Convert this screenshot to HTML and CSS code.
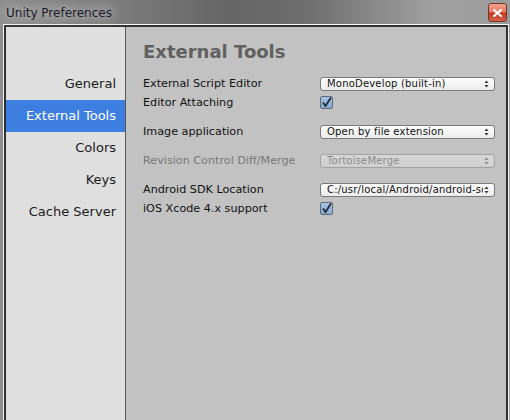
FILE: index.html
```html
<!DOCTYPE html>
<html>
<head>
<meta charset="utf-8">
<link rel="stylesheet" href="styles.css">
</head>
<body>
<div class="window">
  <div class="titlebar">
    <span class="title">Unity Preferences</span>
    <div class="close"><svg width="9" height="8" viewBox="0 0 9 8"><path d="M1 1 L8 7 M8 1 L1 7" stroke="#fff" stroke-width="2.2" stroke-linecap="square"/></svg></div>
  </div>
  <div class="frame">
    <div class="inner">
      <div class="sidebar">
        <div class="item">General</div>
        <div class="item selected">External Tools</div>
        <div class="item">Colors</div>
        <div class="item">Keys</div>
        <div class="item">Cache Server</div>
      </div>
      <div class="content">
        <h1 class="heading">External Tools</h1>
        <div class="row"><span class="label">External Script Editor</span><div class="popup"><span class="clip">MonoDevelop (built-in)</span><svg class="arrows" width="5" height="8" viewBox="0 0 5 8"><path d="M2.5 0.5 L4.5 3 L0.5 3 Z M0.5 5 L4.5 5 L2.5 7.5 Z"/></svg></div></div>
        <div class="row"><span class="label">Editor Attaching</span><div class="check"><svg width="11" height="11" viewBox="0 0 11 11"><path d="M2 5.5 L4.5 9 L10 0.5" stroke="#1e2a36" stroke-width="1.8" fill="none"/></svg></div></div>
        <div class="row gap"><span class="label">Image application</span><div class="popup"><span class="clip">Open by file extension</span><svg class="arrows" width="5" height="8" viewBox="0 0 5 8"><path d="M2.5 0.5 L4.5 3 L0.5 3 Z M0.5 5 L4.5 5 L2.5 7.5 Z"/></svg></div></div>
        <div class="row gap disabled"><span class="label">Revision Control Diff/Merge</span><div class="popup"><span class="clip">TortoiseMerge</span><svg class="arrows" width="5" height="8" viewBox="0 0 5 8"><path d="M2.5 0.5 L4.5 3 L0.5 3 Z M0.5 5 L4.5 5 L2.5 7.5 Z"/></svg></div></div>
        <div class="row gap"><span class="label">Android SDK Location</span><div class="popup"><span class="clip">C:/usr/local/Android/android-sdk</span><svg class="arrows" width="5" height="8" viewBox="0 0 5 8"><path d="M2.5 0.5 L4.5 3 L0.5 3 Z M0.5 5 L4.5 5 L2.5 7.5 Z"/></svg></div></div>
        <div class="row"><span class="label">iOS Xcode 4.x support</span><div class="check"><svg width="11" height="11" viewBox="0 0 11 11"><path d="M2 5.5 L4.5 9 L10 0.5" stroke="#1e2a36" stroke-width="1.8" fill="none"/></svg></div></div>
      </div>
    </div>
  </div>
</div>
</body>
</html>
```
FILE: styles.css
```css
html, body { margin: 0; padding: 0; }
body { width: 510px; height: 420px; overflow: hidden; font-family: "DejaVu Sans", Verdana, sans-serif; }
.window {
  width: 510px; height: 420px; display: flex; flex-direction: column;
  background: linear-gradient(90deg, #8e8e8e 0%, #7a7a7a 25%, #656565 45%, #6e6e6e 60%, #a0a0a0 85%, #9c9c9c 100%);
}
.titlebar { height: 24px; position: relative; display: flex; align-items: center; }
.title {
  margin-left: 6px; font-family: "DejaVu Sans", sans-serif; font-size: 12px; color: #1a1a2a;
  text-shadow: 0 0 8px #c8c8c8, 0 0 14px #c8c8c8, 0 0 20px #bbb;
  margin-top: 1px;
}
.close {
  position: absolute; right: 3px; top: 3px; width: 19px; height: 19px; box-sizing: border-box;
  border: 1px solid #6e3a30; border-radius: 3px;
  background: linear-gradient(180deg, #f4a08a 0%, #e67c63 45%, #c5361d 55%, #d8644a 100%);
  display: flex; align-items: center; justify-content: center;
}
.frame {
  flex: 1; margin: 0 1px 0 3px; border: 1px solid #f4f4f4; border-bottom: none;
  display: flex;
}
.inner {
  flex: 1; border: 2px solid #303030; border-bottom: none; display: flex; background: #c2c2c2;
}
.sidebar {
  width: 119px; background: #dfdfdf; border-right: 1px solid #555; padding-top: 41px;
  display: flex; flex-direction: column;
}
.item {
  height: 32px; line-height: 32px; text-align: right; padding-right: 9px;
  font-size: 13px; color: #1a1a1a;
}
.item.selected { background: #3c7fe0; color: #fff; }
.content { flex: 1; padding: 11px 0 0 17px; }
.heading { margin: 0 0 9px 0; font-size: 18px; font-weight: bold; color: #606060; height: 27px; line-height: 27px; }
.row { display: flex; align-items: center; height: 19px; }
.row.gap { margin-top: 10px; }
.label { width: 177px; font-size: 11.2px; color: #111; }
.disabled .label { color: #777; }
.popup {
  width: 175px; height: 14px; box-sizing: border-box; border: 1px solid #7a7a7a; border-radius: 3px;
  background: linear-gradient(180deg, #fdfdfd 0%, #ececec 100%);
  display: flex; align-items: center;
  font-size: 10px; letter-spacing: 0.2px; color: #111; padding: 0 5px 0 6px; overflow: hidden;
}
.popup .clip { overflow: hidden; white-space: nowrap; flex: 1; min-width: 0; }
.disabled .popup { color: #8a8a8a; border-color: #a2a2a2; background: linear-gradient(180deg, #d6d6d6, #cecece); }
.arrows { fill: #333; flex: none; margin-left: 1px; }
.disabled .arrows { fill: #888; }
.check {
  width: 13px; height: 13px; box-sizing: border-box; border: 1px solid #5a6b7c; border-radius: 2px;
  background: linear-gradient(180deg, #a9c4e4, #86a7cf);
  display: flex; align-items: center; justify-content: center;
}
```
